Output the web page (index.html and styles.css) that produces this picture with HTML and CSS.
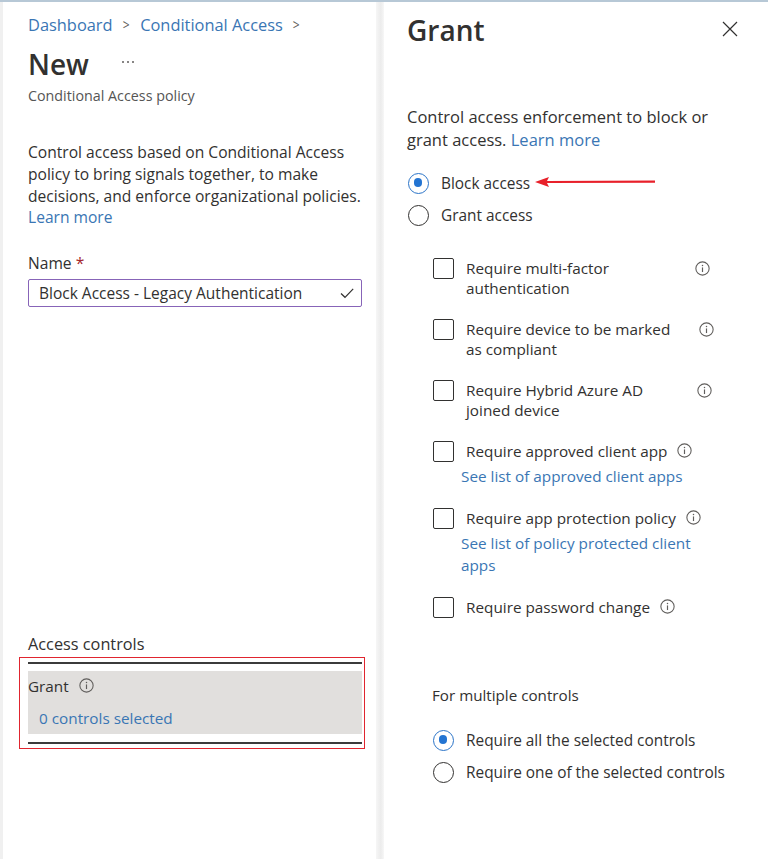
FILE: index.html
```html
<!DOCTYPE html>
<html>
<head>
<meta charset="utf-8">
<link rel="stylesheet" href="styles.css">
</head>
<body>
<div class="page">
  <section class="left">
    <nav class="crumbs">
      <a>Dashboard</a><span class="chev">&gt;</span><a>Conditional Access</a><span class="chev">&gt;</span>
    </nav>
    <div class="title-row">
      <h1>New</h1><span class="more"><i></i><i></i><i></i></span>
    </div>
    <div class="subtitle">Conditional Access policy</div>
    <p class="intro">Control access based on Conditional Access policy to bring signals together, to make decisions, and enforce organizational policies. <a>Learn more</a></p>
    <label class="field-label">Name <span class="req">*</span></label>
    <div class="input">
      <span>Block Access - Legacy Authentication</span>
      <svg width="16" height="16" viewBox="0 0 16 16"><path d="M2 8.5 L6 12.3 L14.2 3.8" fill="none" stroke="#323130" stroke-width="1.2"/></svg>
    </div>
    <div class="spacer"></div>
    <div class="ac-label">Access controls</div>
    <div class="highlight">
      <div class="rule"></div>
      <div class="grant-box">
        <div class="grant-head">Grant <span class="info"></span></div>
        <a class="sel">0 controls selected</a>
      </div>
      <div class="rule"></div>
    </div>
  </section>
  <div class="divider"></div>
  <section class="right">
    <div class="panel-head">
      <h2>Grant</h2>
      <svg class="close" width="16" height="16" viewBox="0 0 16 16"><path d="M1 1 L15 15 M15 1 L1 15" stroke="#323130" stroke-width="1.2"/></svg>
    </div>
    <p class="desc">Control access enforcement to block or grant access. <a>Learn more</a></p>
    <div class="radios">
      <div class="radio on"><span class="dot"></span><span>Block access</span>
        <svg class="arrow" width="124" height="12" viewBox="0 0 124 12"><path d="M2 6 L16 1 L14 5 L122 4.5 L122 6.8 L14 7 L16 11 Z" fill="#e8202a"/></svg>
      </div>
      <div class="radio"><span class="dot"></span><span>Grant access</span></div>
    </div>
    <div class="checks">
      <div class="check"><span class="box"></span><div class="lbl fixed">Require multi-factor authentication</div><span class="info i1"></span></div>
      <div class="check"><span class="box"></span><div class="lbl fixed">Require device to be marked as compliant</div><span class="info i2"></span></div>
      <div class="check"><span class="box"></span><div class="lbl fixed">Require Hybrid Azure AD joined device</div><span class="info i3"></span></div>
      <div class="check"><span class="box"></span><div class="lbl">Require approved client app <span class="info inl"></span><a class="sub">See list of approved client apps</a></div></div>
      <div class="check"><span class="box"></span><div class="lbl">Require app protection policy <span class="info inl"></span><a class="sub">See list of policy protected client apps</a></div></div>
      <div class="check"><span class="box"></span><div class="lbl">Require password change <span class="info inl"></span></div></div>
    </div>
    <div class="multi">
      <div class="multi-label">For multiple controls</div>
      <div class="radio on"><span class="dot"></span><span>Require all the selected controls</span></div>
      <div class="radio"><span class="dot"></span><span>Require one of the selected controls</span></div>
    </div>
  </section>
</div>
</body>
</html>
```
FILE: styles.css
```css
html, body { margin: 0; padding: 0; }
body {
  font-family: "Open Sans", "Noto Sans", sans-serif;
  color: #323130;
  background: #fff;
  width: 768px;
  height: 859px;
  overflow: hidden;
}
a { color: #3a76b4; cursor: pointer; }
.page {
  display: flex;
  height: 859px;
  border-top: 2px solid #b7c8d6;
  box-sizing: border-box;
}
.left {
  width: 376px;
  box-sizing: border-box;
  flex: none;
  padding: 10px 14px 0 28px;
  display: flex;
  flex-direction: column;
  font-size: 15.6px;
  background: linear-gradient(to right, #f0f0f0 0, #f0f0f0 3px, #fff 3px);
}
.crumbs { font-size: 16.4px; display: flex; align-items: center; height: 24px; }
.crumbs .chev { color: #605e5c; margin: 0 10px 0 9px; font-size: 15px; transform: scaleX(0.8); display: inline-block; }
.title-row { display: flex; align-items: center; margin-top: 10px; height: 36px; }
h1 { font-size: 28px; font-weight: 600; margin: 0; }
.more { margin-left: 33px; display: flex; gap: 3px; margin-top: -4px; }
.more i { width: 2px; height: 2px; border-radius: 50%; background: #605e5c; display: block; }
.subtitle { font-size: 14.3px; color: #555; margin-top: 4px; }
.intro { margin: 37px 0 0; line-height: 21.8px; font-size: 15.6px; }
.field-label { margin-top: 24px; display: block; font-size: 15.6px; line-height: 20px; }
.req { color: #a4262c; }
.input {
  margin-top: 6px;
  height: 26px;
  border: 1px solid #8764b8;
  border-radius: 2px;
  display: flex;
  align-items: center;
  justify-content: space-between;
  padding: 0 6px 0 10px;
  font-size: 15.5px;
}
.spacer { flex: 0 0 326px; }
.ac-label { font-size: 16.3px; line-height: 22px; }
.highlight {
  margin: 2px -3px 0 -9px;
  border: 1px solid #e0252f;
  padding: 4px 2px 4px 8px;
}
.rule { height: 2px; background: #3b3b3b; }
.grant-box { background: #e1dfdd; margin: 7px 0 8px; padding: 5px 0 6px 0; }
.grant-head { display: flex; align-items: center; gap: 10px; font-size: 15.3px; height: 20px; }
.grant-head .info { margin-top: -2px; }
.sel { display: block; margin: 12px 0 0 11px; font-size: 15.3px; }
.divider {
  width: 8px;
  flex: none;
  background: linear-gradient(to right, #f6f6f6, #ececec 60%, #f7f7f7);
}
.right {
  flex: 1;
  padding: 10px 0 0 23px;
  font-size: 15.4px;
}
.panel-head { display: flex; align-items: center; justify-content: space-between; height: 36px; padding-right: 30px; }
h2 { font-size: 28px; font-weight: 600; margin: 0; }
.close { margin-top: -2px; }
.desc { margin: 58px 0 0; line-height: 22.5px; font-size: 16.5px; width: 340px; }
.radios { margin-top: 16px; }
.radio { display: flex; align-items: center; height: 32px; gap: 12px; font-size: 15.4px; position: relative; }
.dot {
  width: 21px; height: 21px; border: 1.6px solid #323130; border-radius: 50%;
  box-sizing: border-box; flex: none; position: relative; margin-left: 1px;
}
.radio.on .dot { border-color: #2b74c8; }
.radio.on .dot::after {
  content: ""; position: absolute; left: 4.6px; top: 4.6px; width: 8.6px; height: 8.6px; border-radius: 50%; background: #2374d2;
}
.arrow { position: absolute; left: 126px; top: 9px; }
.checks { margin-top: 27px; padding-left: 26px; }
.check { display: flex; align-items: flex-start; margin-bottom: 21px; font-size: 15.3px; line-height: 20px; }
.box { width: 21px; height: 21px; border: 1.4px solid #323130; border-radius: 2px; box-sizing: border-box; flex: none; margin-top: 0; margin-right: 12px; }
.lbl.fixed { width: 215px; }
.info {
  display: inline-block; width: 15px; height: 15px; flex: none;
  background: url("data:image/svg+xml,%3Csvg xmlns='http://www.w3.org/2000/svg' width='15' height='15' viewBox='0 0 14 14'%3E%3Ccircle cx='7' cy='7' r='6.2' fill='none' stroke='%23605e5c' stroke-width='1'/%3E%3Cpath d='M7 6V10.3' stroke='%23605e5c' stroke-width='1.1'/%3E%3Ccircle cx='7' cy='4.1' r='0.7' fill='%23605e5c'/%3E%3C/svg%3E") no-repeat;
  background-size: 15px 15px;
}
.i1 { margin: 3px 0 0 14px; }
.i2 { margin: 3px 0 0 18px; }
.i3 { margin: 3px 0 0 16px; }
.inl { margin-left: 6px; vertical-align: -1px; }
.sub { display: block; margin-left: -5px; margin-top: 4px; line-height: 22px; width: 240px; }
.multi { margin-top: 67px; padding-left: 25px; }
.multi-label { font-size: 15.2px; margin-bottom: 19px; }
.multi .radio { gap: 12px; }
```
